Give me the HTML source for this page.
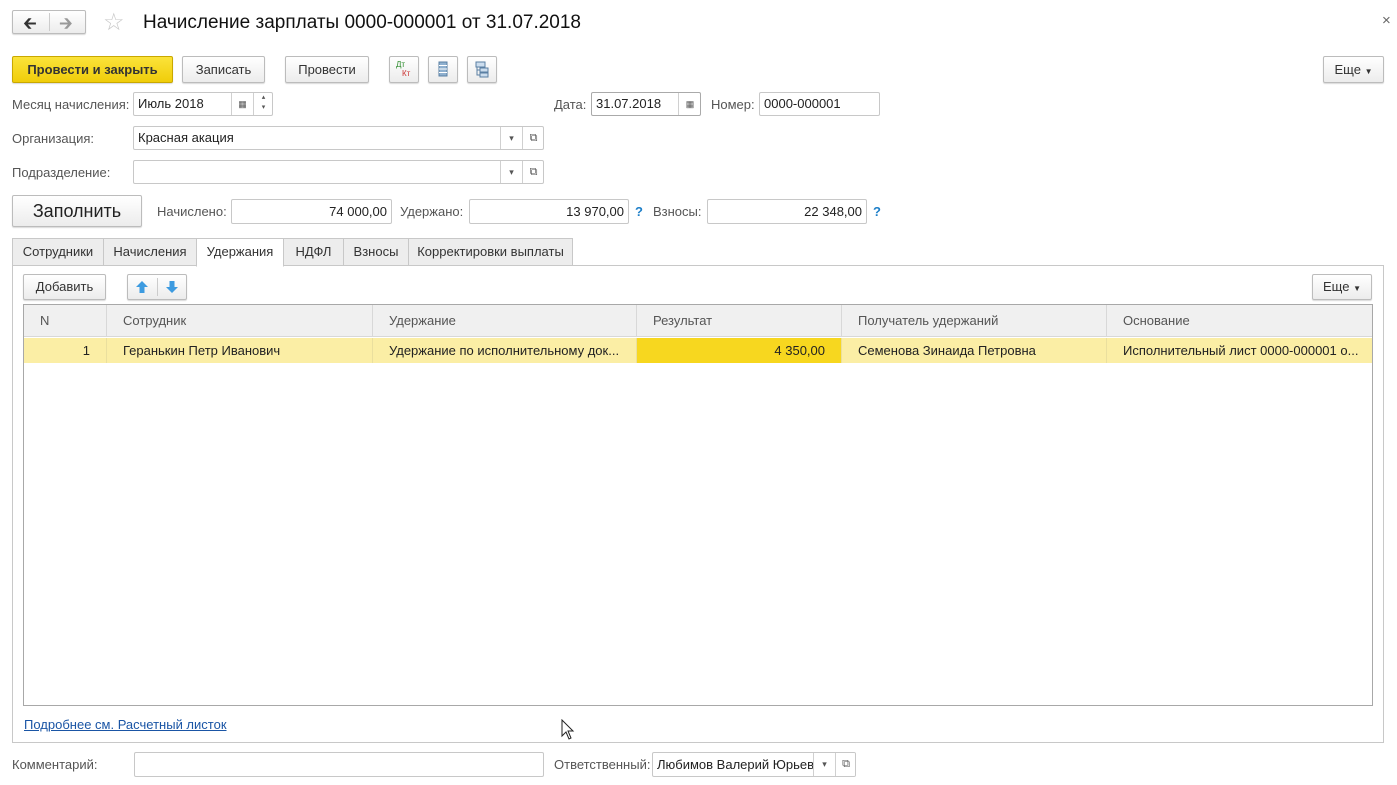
<!DOCTYPE html>
<html><head><meta charset="utf-8"><style>
*{box-sizing:border-box;margin:0;padding:0}
body{width:1397px;height:785px;background:#fff;font-family:"Liberation Sans",Arial,sans-serif;font-size:13px;color:#333;position:relative;overflow:hidden}
.a{position:absolute;white-space:nowrap}
.btn{position:absolute;border:1px solid #bcbcbc;border-radius:2px;background:linear-gradient(#fff,#ececec);box-shadow:0 1px 1px rgba(0,0,0,.15);text-align:center;color:#333}
.inp{position:absolute;border:1px solid #c8c8c8;border-radius:2px;background:#fff;padding-left:4px;color:#222}
.lbl{position:absolute;color:#555;white-space:nowrap}
.sq{position:absolute;border-left:1px solid #d0d0d0;height:100%;top:0;text-align:center;color:#555;font-size:9px}
.tab{position:absolute;top:238px;height:28px;border:1px solid #c8c8c8;background:#ededed;line-height:26px;text-align:center;color:#333}
.th{position:absolute;top:0;height:32px;line-height:31px;border-right:1px solid #d8d8d8;padding-left:16px;color:#555}
.td{position:absolute;top:33px;height:25px;line-height:25px;border-right:1px solid #eadf9e;padding-left:16px;color:#222;overflow:hidden}
.q{position:absolute;color:#1e7fc8;font-weight:bold}
</style></head><body>
<div class="btn" style="left:12px;top:10px;width:74px;height:24px"></div>
<div class="a" style="left:49px;top:13px;height:18px;border-left:1px solid #ccc"></div>
<div class="a" style="left:23px;top:11px;font-size:17px;color:#333">&#129136;</div>
<div class="a" style="left:59px;top:11px;font-size:17px;color:#999">&#129138;</div>
<div class="a" style="left:103px;top:8px;font-size:24px;color:#c8c8c8">☆</div>
<div class="a" style="left:143px;top:12px;font-size:19px;color:#111">Начисление зарплаты 0000-000001 от 31.07.2018</div>
<div class="a" style="left:1382px;top:12px;font-size:15px;color:#666">×</div>

<div class="btn" style="left:12px;top:56px;width:161px;height:27px;background:linear-gradient(#fbe33a,#f0cd0a);border-color:#c9a800;line-height:25px;font-weight:bold;color:#333">Провести и закрыть</div>
<div class="btn" style="left:182px;top:56px;width:83px;height:27px;line-height:25px">Записать</div>
<div class="btn" style="left:285px;top:56px;width:84px;height:27px;line-height:25px">Провести</div>
<div class="btn" style="left:389px;top:56px;width:30px;height:27px"><span class="a" style="left:6px;top:3px;font-size:8px;color:#2a8a2a">Дт</span><span class="a" style="left:12px;top:12px;font-size:8px;color:#c33">Кт</span></div>
<div class="btn" style="left:428px;top:56px;width:30px;height:27px"><svg width="28" height="25" viewBox="0 0 28 25"><rect x="10" y="5" width="8" height="14" fill="#8fb0cf" stroke="#5a7fa3"/><path d="M10 8.5h8M10 12h8M10 15.5h8" stroke="#fff"/></svg></div>
<div class="btn" style="left:467px;top:56px;width:30px;height:27px"><svg width="28" height="25" viewBox="0 0 28 25"><rect x="8" y="5" width="9" height="5" fill="#cde" stroke="#5a7fa3"/><rect x="12" y="11" width="8" height="4" fill="#cde" stroke="#5a7fa3"/><rect x="12" y="16" width="8" height="4" fill="#cde" stroke="#5a7fa3"/><path d="M9 10v8h3M9 13h3" stroke="#5a7fa3" fill="none"/></svg></div>
<div class="btn" style="left:1323px;top:56px;width:61px;height:27px;line-height:25px">Еще <span style="font-size:8px">▼</span></div>

<div class="lbl" style="left:12px;top:97px">Месяц начисления:</div>
<div class="inp" style="left:133px;top:92px;width:140px;height:24px;line-height:22px">Июль 2018<span class="sq" style="left:97px;width:22px;line-height:22px">▦</span><span class="sq" style="left:119px;width:20px;line-height:10px;font-size:7px">▴<br>▾</span></div>
<div class="lbl" style="left:554px;top:97px">Дата:</div>
<div class="inp" style="left:591px;top:92px;width:110px;height:24px;line-height:22px;border-color:#aaa">31.07.2018<span class="sq" style="left:86px;width:23px;line-height:22px">▦</span></div>
<div class="lbl" style="left:711px;top:97px">Номер:</div>
<div class="inp" style="left:759px;top:92px;width:121px;height:24px;line-height:22px">0000-000001</div>

<div class="lbl" style="left:12px;top:131px">Организация:</div>
<div class="inp" style="left:133px;top:126px;width:411px;height:24px;line-height:22px">Красная акация<span class="sq" style="left:366px;width:22px;line-height:22px">▾</span><span class="sq" style="left:388px;width:22px;line-height:22px;font-size:11px">⧉</span></div>
<div class="lbl" style="left:12px;top:165px">Подразделение:</div>
<div class="inp" style="left:133px;top:160px;width:411px;height:24px"><span class="sq" style="left:366px;width:22px;line-height:22px">▾</span><span class="sq" style="left:388px;width:22px;line-height:22px;font-size:11px">⧉</span></div>

<div class="btn" style="left:12px;top:195px;width:130px;height:32px;line-height:30px;font-size:18px;color:#222">Заполнить</div>
<div class="lbl" style="left:157px;top:204px">Начислено:</div>
<div class="inp" style="left:231px;top:199px;width:161px;height:25px;line-height:23px;text-align:right;padding-right:4px">74 000,00</div>
<div class="lbl" style="left:400px;top:204px">Удержано:</div>
<div class="inp" style="left:469px;top:199px;width:160px;height:25px;line-height:23px;text-align:right;padding-right:4px">13 970,00</div>
<div class="q" style="left:635px;top:204px">?</div>
<div class="lbl" style="left:653px;top:204px">Взносы:</div>
<div class="inp" style="left:707px;top:199px;width:160px;height:25px;line-height:23px;text-align:right;padding-right:4px">22 348,00</div>
<div class="q" style="left:873px;top:204px">?</div>

<div class="a" style="left:12px;top:265px;width:1372px;height:478px;border:1px solid #c8c8c8"></div>
<div class="tab" style="left:12px;width:92px">Сотрудники</div>
<div class="tab" style="left:103px;width:94px">Начисления</div>
<div class="tab" style="left:196px;width:88px;background:#fff;border-bottom-color:#fff;height:29px">Удержания</div>
<div class="tab" style="left:283px;width:61px">НДФЛ</div>
<div class="tab" style="left:343px;width:66px">Взносы</div>
<div class="tab" style="left:408px;width:165px">Корректировки выплаты</div>

<div class="btn" style="left:23px;top:274px;width:83px;height:26px;line-height:24px">Добавить</div>
<div class="btn" style="left:127px;top:274px;width:60px;height:26px"><span class="a" style="left:29px;top:3px;height:18px;border-left:1px solid #ccc"></span><svg class="a" style="left:6px;top:5px" width="16" height="14" viewBox="0 0 16 14"><path d="M8 1l6 6h-3.5v6h-5v-6H2z" fill="#3d9be0"/></svg><svg class="a" style="left:36px;top:5px" width="16" height="14" viewBox="0 0 16 14"><path d="M8 13l6-6h-3.5V1h-5v6H2z" fill="#3d9be0"/></svg></div>
<div class="btn" style="left:1312px;top:274px;width:60px;height:26px;line-height:24px">Еще <span style="font-size:8px">▼</span></div>

<div class="a" style="left:23px;top:304px;width:1350px;height:402px;border:1px solid #a8a8a8;overflow:hidden">
 <div class="a" style="left:0;top:0;width:100%;height:32px;background:#f0f0f0;border-bottom:1px solid #d8d8d8"></div>
 <div class="th" style="left:0;width:83px">N</div>
 <div class="th" style="left:83px;width:266px;padding-left:16px">Сотрудник</div>
 <div class="th" style="left:349px;width:264px">Удержание</div>
 <div class="th" style="left:613px;width:205px">Результат</div>
 <div class="th" style="left:818px;width:265px">Получатель удержаний</div>
 <div class="th" style="left:1083px;width:270px;border-right:none">Основание</div>
 <div class="a" style="left:0;top:33px;width:100%;height:25px;background:#fbeea5"></div>
 <div class="td" style="left:0;width:83px;text-align:right;padding-right:16px">1</div>
 <div class="td" style="left:83px;width:266px">Геранькин Петр Иванович</div>
 <div class="td" style="left:349px;width:264px">Удержание по исполнительному док...</div>
 <div class="td" style="left:613px;width:205px;background:#f7d71f;text-align:right;padding-right:16px">4 350,00</div>
 <div class="td" style="left:818px;width:265px">Семенова Зинаида Петровна</div>
 <div class="td" style="left:1083px;width:266px;border-right:none">Исполнительный лист 0000-000001 о...</div>
</div>
<div class="a" style="left:24px;top:717px;color:#1a55a5;text-decoration:underline">Подробнее см. Расчетный листок</div>
<svg class="a" style="left:561px;top:719px" width="14" height="22" viewBox="0 0 14 22"><path d="M1 1v16l4-4 3 7 2-1-3-7h5z" fill="#fff" stroke="#222"/></svg>

<div class="lbl" style="left:12px;top:757px">Комментарий:</div>
<div class="inp" style="left:134px;top:752px;width:410px;height:25px"></div>
<div class="lbl" style="left:554px;top:757px">Ответственный:</div>
<div class="inp" style="left:652px;top:752px;width:204px;height:25px;line-height:23px;overflow:hidden">Любимов Валерий Юрьев<span class="sq" style="left:160px;width:22px;line-height:23px;background:#fff">▾</span><span class="sq" style="left:182px;width:21px;line-height:23px;font-size:11px;background:#fff">⧉</span></div>
</body></html>
